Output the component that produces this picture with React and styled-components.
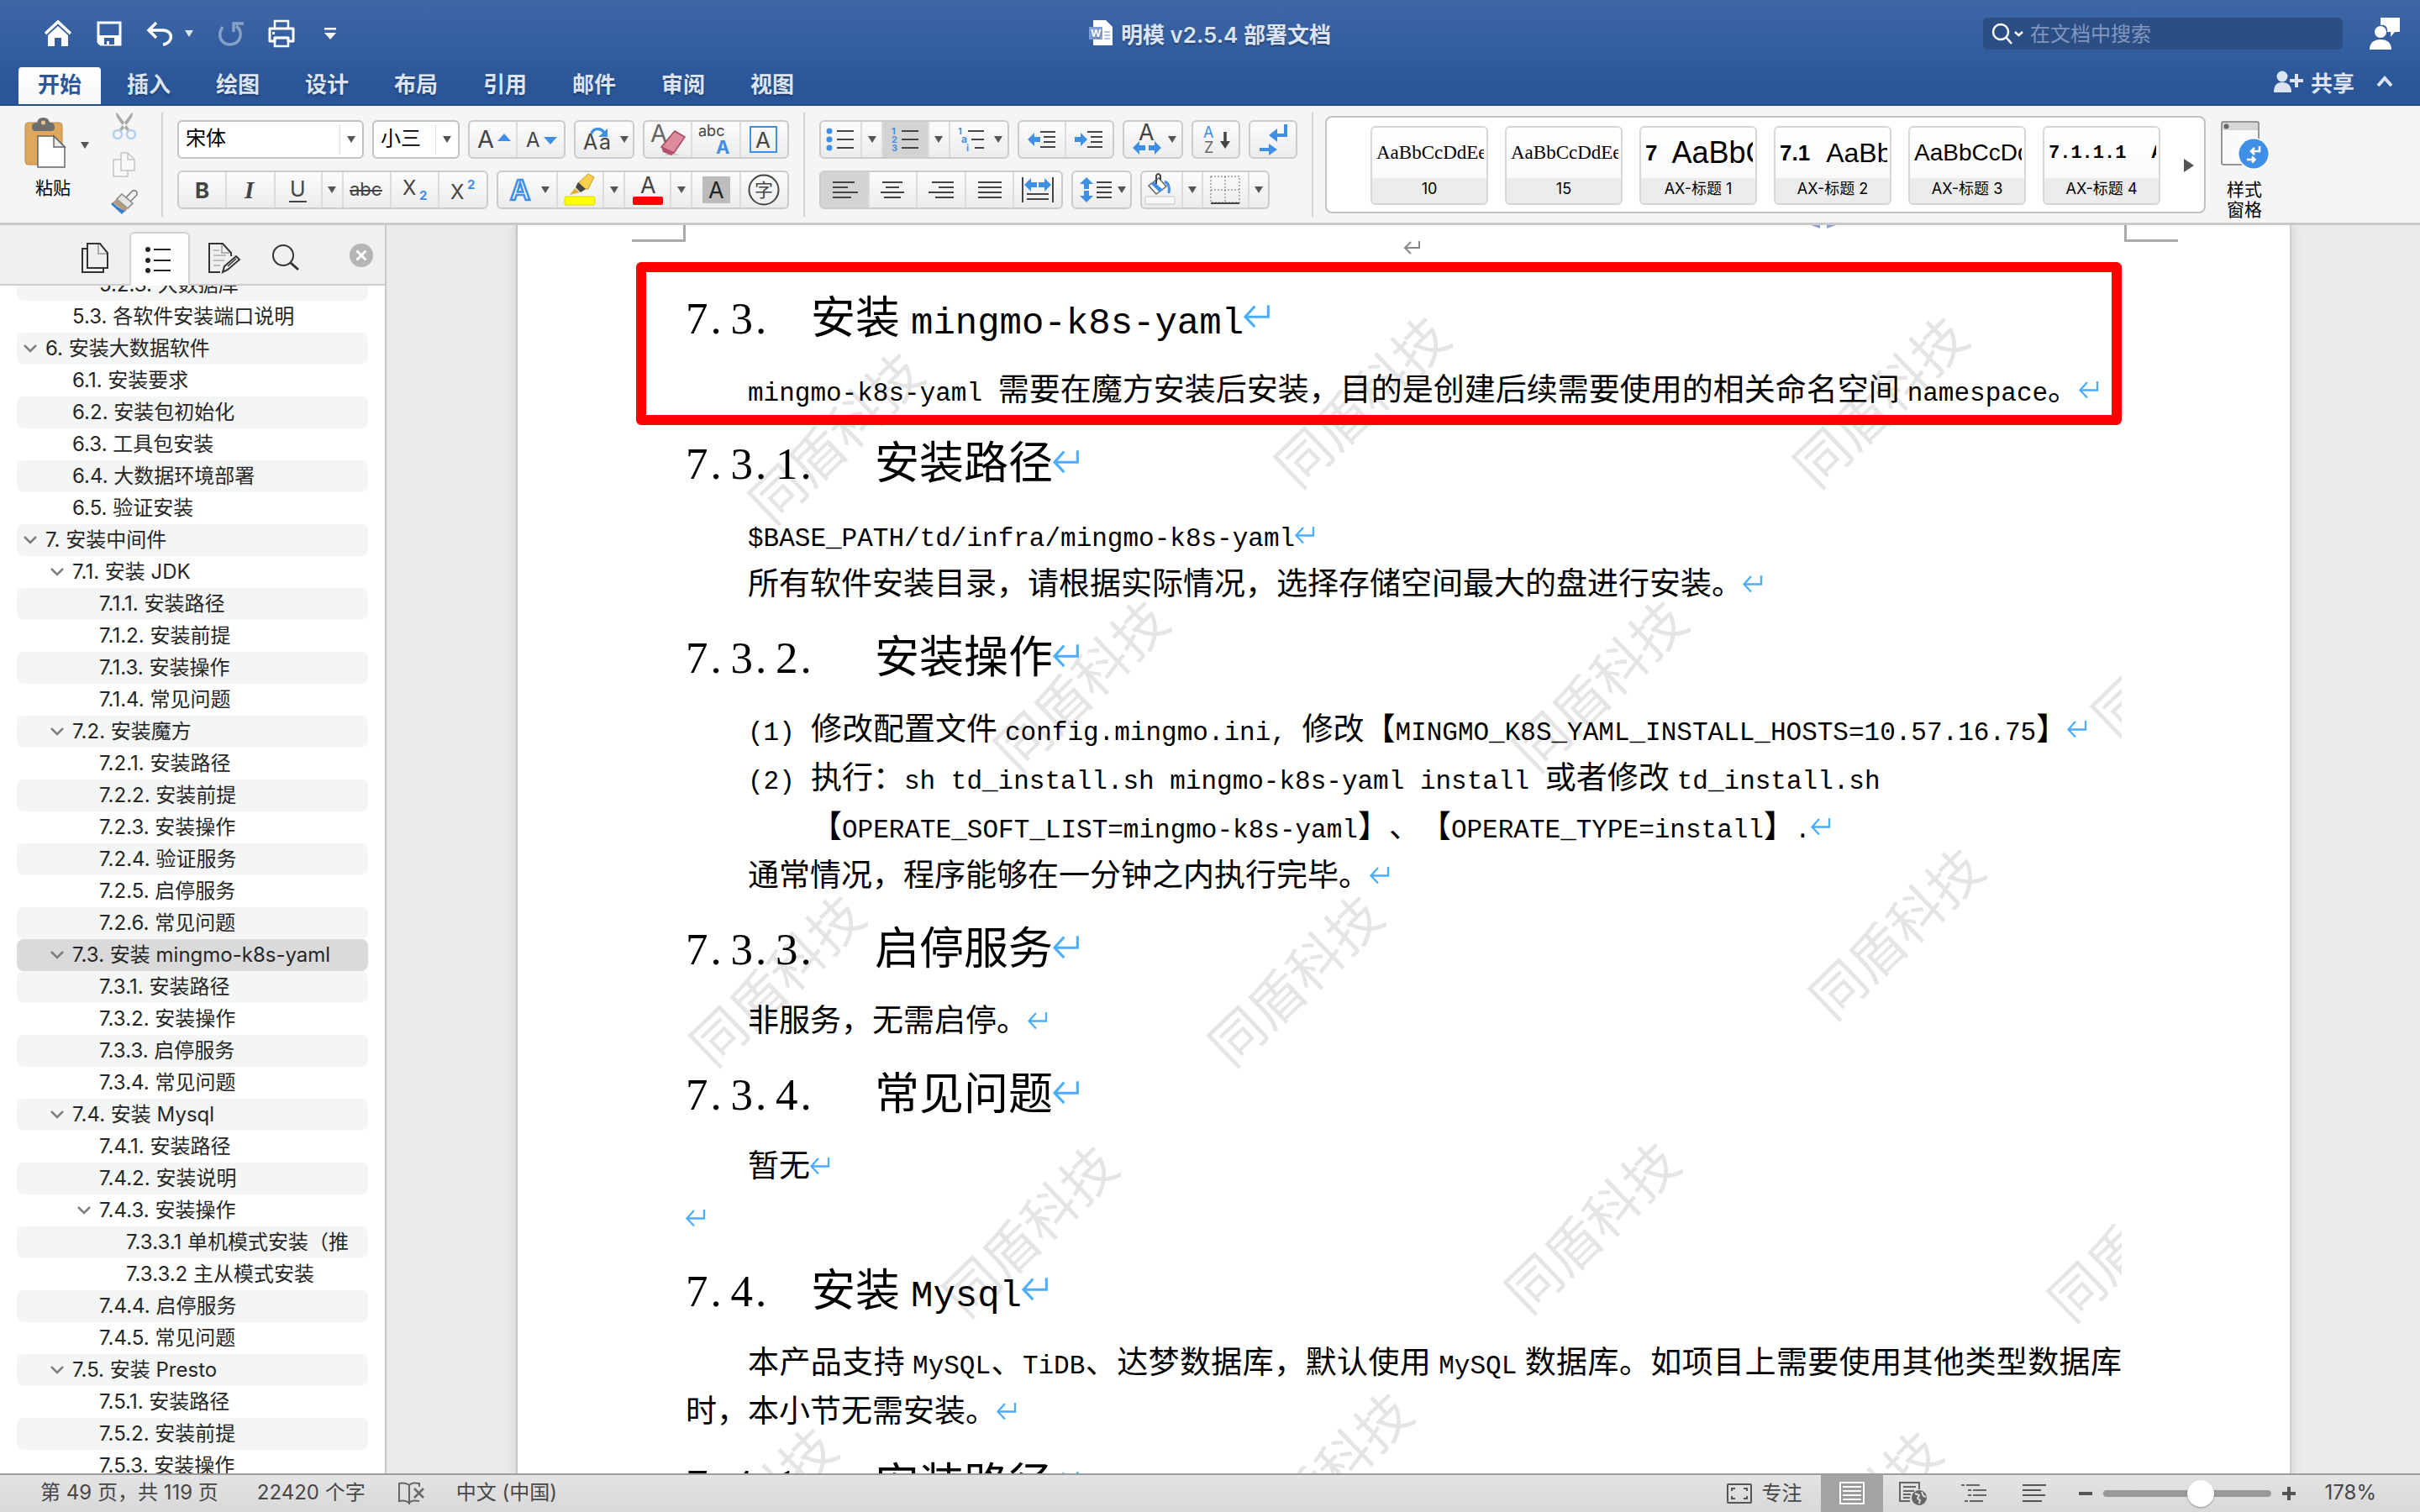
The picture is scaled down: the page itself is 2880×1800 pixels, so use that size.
import React from "react";
import styled, { createGlobalStyle, css } from "styled-components";

const UI = `Inter, "Noto Sans CJK SC", sans-serif`;
const SONG = `"Noto Sans CJK SC", sans-serif`;
const MONO = `"Liberation Mono", "Noto Sans CJK SC", monospace`;
const BLUE = "#3f8fe6";
const INK = "#444";

const GlobalStyle = createGlobalStyle`
  *, *::before, *::after { box-sizing: border-box; }
  body { margin: 0; font-family: ${UI}; color: #000; background: #ebebeb; }
  button, input, select { font: inherit; color: inherit; margin: 0; }
  h1, h2, h3, p, ul { margin: 0; padding: 0; font-weight: 400; }
  ul { list-style: none; }
  svg { display: block; flex: none; overflow: visible; }
`;

const App = styled.div`
  display: flex;
  flex-direction: column;
  height: 100vh;
  overflow: hidden;
`;

/* ---------- title bar ---------- */

const TitleBar = styled.header`
  flex: none;
  display: flex;
  flex-direction: column;
  justify-content: space-between;
  height: 126px;
  background: linear-gradient(#3e67a6, #2a5699 82%);
  border-bottom: 2px solid #254b82;
  color: #dde4f1;
`;

const TitleRow = styled.div`
  display: grid;
  grid-template-columns: 1fr auto 1fr;
  align-items: center;
  height: 80px;
  padding: 0 24px;
`;

const QuickTools = styled.div`
  display: flex;
  align-items: center;
  gap: 29px;
  padding-left: 28px;
`;

const PlainButton = styled.button`
  display: flex;
  align-items: center;
  gap: ${(p) => p.$gap || 0}px;
  padding: 0;
  border: 0;
  background: none;
  opacity: ${(p) => (p.disabled ? 0.4 : 1)};
`;

const DocTitle = styled.h1`
  display: flex;
  align-items: center;
  gap: 10px;
  padding-bottom: 2px;
  font-size: 26px;
  font-weight: 600;
  text-shadow: 0 2px 2px rgba(0, 0, 0, 0.3);
`;

const TitleRight = styled.div`
  display: flex;
  align-items: center;
  justify-content: flex-end;
  gap: 32px;
`;

const SearchBox = styled.label`
  display: flex;
  align-items: center;
  gap: 8px;
  width: 428px;
  height: 38px;
  padding: 0 10px;
  border-radius: 6px;
  background: #2b4e85;
`;

const SearchInput = styled.input`
  flex: 1;
  min-width: 0;
  padding: 0;
  border: 0;
  outline: 0;
  background: none;
  font-size: 24px;
  color: #fff;
  &::placeholder { color: #8197bf; opacity: 1; }
`;

const TabRow = styled.nav`
  display: flex;
  align-items: flex-end;
  justify-content: space-between;
  height: 44px;
  padding: 0 32px 0 22px;
`;

const Tabs = styled.div`
  display: flex;
`;

const Tab = styled.button`
  width: 106px;
  height: 44px;
  padding: 0 0 2px;
  border: 0;
  background: none;
  font-size: 26px;
  font-weight: 600;
  line-height: 42px;
  text-shadow: 0 2px 2px rgba(0, 0, 0, 0.3);
  ${(p) => p.$active && css`
    width: 98px;
    margin-right: 4px;
    border-radius: 4px 4px 0 0;
    background: linear-gradient(#fff, #f7f7f7);
    color: #2b579a;
    text-shadow: none;
  `}
`;

const ShareArea = styled.div`
  display: flex;
  align-items: center;
  gap: 26px;
  height: 44px;
  padding-bottom: 10px;
  font-size: 26px;
  font-weight: 600;
`;

/* ---------- ribbon ---------- */

const Ribbon = styled.section`
  flex: none;
  display: flex;
  height: 142px;
  padding: 8px 24px 0 18px;
  background: #f5f5f5;
  border-bottom: 3px solid #c9c9c9;
`;

const Separator = styled.div`
  flex: none;
  width: 2px;
  height: 124px;
  margin: 0 ${(p) => p.$right}px 0 ${(p) => p.$left}px;
  background: #d4d4d4;
`;

const Clipboard = styled.div`
  display: flex;
  width: 150px;
  justify-content: space-between;
`;

const PasteButton = styled.button`
  display: flex;
  flex-direction: column;
  align-items: center;
  gap: 12px;
  width: 90px;
  padding: 6px 0 0;
  border: 0;
  background: none;
  font-size: 21px;
  line-height: 24px;
`;

const SmallTools = styled.div`
  display: flex;
  flex-direction: column;
  align-items: center;
  gap: 15px;
  width: 40px;
`;

const ToolRows = styled.div`
  display: flex;
  flex-direction: column;
  gap: 14px;
  padding-top: 9px;
`;

const ToolRow = styled.div`
  display: flex;
  gap: 10px;
  height: 46px;
`;

const Group = styled.div`
  display: flex;
  width: ${(p) => p.$w}px;
  border: 2px solid #cbcbcb;
  border-radius: 6px;
  background: linear-gradient(#fcfcfc, #ececec);
`;

const Cell = styled.button`
  display: flex;
  align-items: center;
  justify-content: center;
  flex: ${(p) => p.$w} 1 0;
  min-width: 0;
  padding: 0;
  border: 0;
  border-left: ${(p) => (p.$first ? 0 : 2)}px solid #dcdcdc;
  background: ${(p) => (p.$on ? "#d3d3d3" : "none")};
`;

const Combo = styled.div`
  display: flex;
  align-items: center;
  width: ${(p) => p.$w}px;
  border: 2px solid #c2c2c2;
  border-radius: 6px;
  background: #fff;
`;

const ComboSelect = styled.select`
  flex: 1;
  height: 40px;
  min-width: 0;
  padding: 0 0 4px 8px;
  border: 0;
  outline: 0;
  appearance: none;
  background: none;
  font-size: 24px;
`;

const ComboArrow = styled.span`
  display: flex;
  align-items: center;
  justify-content: center;
  width: 27px;
  height: 36px;
  border-left: 1px solid #dedede;
`;

const Gallery = styled.div`
  flex: 1;
  display: flex;
  align-items: flex-start;
  justify-content: space-between;
  height: 116px;
  margin-top: 4px;
  padding: 10px 12px 0 52px;
  border: 2px solid #c2c2c2;
  border-radius: 8px;
  background: #fff;
`;

const Cards = styled.div`
  display: flex;
  gap: 20px;
`;

const Card = styled.button`
  display: flex;
  flex-direction: column;
  width: 140px;
  height: 94px;
  padding: 0;
  border: 2px solid #d6d6d6;
  border-radius: 6px;
  background: linear-gradient(#fff, #f7f7f7);
  overflow: hidden;
`;

const Sample = styled.span`
  display: flex;
  align-items: center;
  gap: ${(p) => p.$gap || 0}px;
  width: 128px;
  height: 60px;
  margin-left: 5px;
  overflow: hidden;
  white-space: pre;
  font-family: ${(p) => p.$face};
  font-size: ${(p) => p.$size}px;
  font-weight: ${(p) => (p.$bold ? 700 : 400)};
`;

const SampleNumber = styled.b`
  font-size: 26px;
`;

const CardLabel = styled.span`
  flex: 1;
  align-self: stretch;
  background: #ececec;
  font-size: 18px;
  line-height: 26px;
  text-align: center;
`;

const GalleryNext = styled(PlainButton)`
  align-self: stretch;
  padding-bottom: 8px;
`;

const PaneButton = styled.button`
  display: flex;
  flex-direction: column;
  align-items: center;
  gap: 10px;
  width: 60px;
  margin: 0 155px 0 16px;
  padding: 10px 0 0;
  border: 0;
  background: none;
  font-size: 21px;
  line-height: 24px;
`;

/* ---------- navigation pane ---------- */

const Body = styled.div`
  flex: 1;
  display: flex;
  min-height: 0;
`;

const Sidebar = styled.aside`
  flex: none;
  display: flex;
  flex-direction: column;
  width: 460px;
  border-right: 2px solid #c6c6c6;
  background: #fff;
`;

const PaneTabs = styled.div`
  flex: none;
  display: flex;
  align-items: flex-end;
  height: 72px;
  padding: 0 14px 0 72px;
  border-bottom: 2px solid #cdcdcd;
  background: #f0f0f0;
`;

const PaneTab = styled.button`
  display: flex;
  align-items: center;
  justify-content: center;
  width: ${(p) => p.$w}px;
  height: 62px;
  padding: 0;
  border: 0;
  background: none;
  ${(p) => p.$active && css`
    margin: 0 0 -2px;
    height: 64px;
    border: 2px solid #d2d2d2;
    border-bottom: 0;
    border-radius: 6px 6px 0 0;
    background: #fdfdfd;
  `}
`;

const CloseButton = styled(PlainButton)`
  margin: 0 0 20px auto;
`;

const Outline = styled.ul`
  flex: 1;
  min-height: 0;
  padding: 0 20px;
  overflow: hidden;
`;

const OutlineItem = styled.li`
  border-radius: 8px;
  background: ${(p) => (p.$selected ? "#dadada" : p.$tint ? "#f4f5f5" : "transparent")};
  &:first-child { margin-top: -20px; }
`;

const OutlineLink = styled.a`
  display: flex;
  align-items: center;
  gap: 10px;
  height: 38px;
  padding-left: ${(p) => 8 + p.$depth * 32}px;
  overflow: hidden;
  color: #262626;
  font-size: 24px;
  line-height: 38px;
  text-decoration: none;
  white-space: nowrap;
`;

const Twisty = styled.span`
  flex: none;
  width: 16px;
`;

/* ---------- document ---------- */

const Workspace = styled.main`
  flex: 1;
  min-width: 0;
  padding: 0 153px 0 154px;
  background: #ebebeb;
  overflow: hidden;
`;

const Page = styled.article`
  position: relative;
  min-height: 100%;
  border-left: 2px solid #c4c4c4;
  border-right: 2px solid #cfcfcf;
  background: #fff;
  box-shadow: 0 0 14px rgba(0, 0, 0, 0.12);
`;

const WatermarkLayer = styled.div`
  position: absolute;
  inset: 0 200px 0 0;
  overflow: hidden;
`;

const Watermark = styled.span`
  position: absolute;
  left: ${(p) => p.$x}px;
  top: ${(p) => p.$y}px;
  transform: translate(-50%, -50%) rotate(-44deg);
  color: #e5e5e5;
  font-family: ${SONG};
  font-size: 64px;
  line-height: 64px;
  white-space: nowrap;
`;

const PageHeader = styled.div`
  position: relative;
  display: flex;
  justify-content: center;
  height: 49px;
  padding: 19px 0 0 20px;
`;

const CropMark = styled.span`
  position: absolute;
  top: 0;
  width: 64px;
  height: 20px;
  border-bottom: 3px solid #aaa;
  ${(p) => (p.$side === "left"
    ? "left: 136px; border-right: 3px solid #aaa;"
    : "right: 133px; border-left: 3px solid #aaa;")}
`;

const HeaderRemnant = styled.span`
  position: absolute;
  top: 0;
  right: 540px;
`;

const Text = styled.div`
  position: relative;
  padding: 0 200px;
  font-family: ${SONG};
  font-size: 37px;
  line-height: 58px;
  text-spacing-trim: space-all;
  white-space: nowrap;
`;

const Boxed = styled.section`
  position: relative;
  &::after {
    content: "";
    position: absolute;
    inset: -5px 0 -16px -59px;
    border: 12px solid #ff0000;
    border-radius: 6px;
  }
`;

const Heading = styled.h2`
  font-size: 53px;
  line-height: 115px;
`;

const HeadingNumber = styled.span`
  display: inline-block;
  width: ${(p) => (p.$level === 2 ? 149 : 225)}px;
  font-family: "Liberation Serif", serif;
  line-height: 1;
`;

const Dot = styled.span`
  display: inline-block;
  width: 27px;
  padding-left: 3px;
`;

const Para = styled.p`
  padding-left: 74px;
`;

const HangingPara = styled.p`
  padding-left: 149px;
  text-indent: -75px;
`;

const ItemNumber = styled.span`
  display: inline-block;
  width: 75px;
  text-indent: 0;
  font-family: ${MONO};
  font-size: 31px;
  line-height: 1;
`;

const FullLine = styled.span`
  display: block;
  text-align-last: justify;
`;

const NextLine = styled.span`
  display: block;
  margin-left: -74px;
`;

const EmptyPara = styled.p`
  height: 61px;
  padding-top: 4px;
`;

const Latin = styled.span`
  margin-left: ${(p) => (p.$before ? (p.$large ? 13 : 9) : 0)}px;
  margin-right: ${(p) => (p.$after ? 9 : 0)}px;
  font-family: ${MONO};
  font-size: ${(p) => (p.$large ? 44 : 31)}px;
  line-height: 1;
  white-space: pre;
`;

const MarkIcon = styled.svg`
  display: inline-block;
  width: ${(p) => (p.$large ? 32 : 24)}px;
  height: ${(p) => (p.$large ? 27 : 20)}px;
  vertical-align: ${(p) => (p.$large ? 7 : 3)}px;
`;

/* ---------- status bar ---------- */

const StatusBar = styled.footer`
  flex: none;
  display: flex;
  align-items: center;
  justify-content: space-between;
  height: 46px;
  padding: 0 52px 0 48px;
  border-top: 2px solid #9d9d9d;
  background: linear-gradient(#e4e4e4, #d8d8d8);
  color: #474747;
  font-size: 24px;
  line-height: 42px;
`;

const StatusSide = styled.div`
  display: flex;
  align-items: center;
  gap: ${(p) => p.$gap}px;
  height: 100%;
`;

const StatusText = styled.span`
  height: 44px;
  margin-right: ${(p) => (p.$wide ? 8 : 0)}px;
`;

const ViewButton = styled.button`
  display: flex;
  align-items: center;
  justify-content: center;
  width: ${(p) => (p.$on ? 74 : 72)}px;
  height: 44px;
  padding: 0;
  border: 0;
  background: ${(p) => (p.$on ? "#a3a3a3" : "none")};
`;

const ZoomControls = styled.div`
  display: flex;
  align-items: center;
  gap: 13px;
  margin-left: 17px;
`;

const ZoomSlider = styled.input`
  width: 200px;
  height: 34px;
  appearance: none;
  background: none;
  &::-webkit-slider-runnable-track {
    height: 8px;
    border-radius: 4px;
    background: #999;
  }
  &::-webkit-slider-thumb {
    appearance: none;
    width: 32px;
    height: 32px;
    margin-top: -12px;
    border-radius: 50%;
    background: #fff;
    box-shadow: 0 1px 2px rgba(0, 0, 0, 0.35);
  }
`;

const ZoomValue = styled.output`
  height: 44px;
  margin-left: 22px;
`;

const FocusButton = styled(PlainButton)`
  margin-right: 22px;
`;

/* ---------- drawings ---------- */

const Svg = ({ w, h = 42, children, ...rest }) => (
  <svg width={w} height={h} viewBox={`0 0 ${w} ${h}`} fill="none" aria-hidden="true" {...rest}>
    {children}
  </svg>
);

const Glyph = ({ x, y, s, c = INK, b, children, ...rest }) => (
  <text x={x} y={y} fontSize={s} fill={c} fontWeight={b ? 700 : 400} fontFamily={UI} {...rest}>
    {children}
  </text>
);

const Caret = ({ color = "#555" }) => (
  <Svg w={10} h={8}><path d="M0 0H10L5 8Z" fill={color} /></Svg>
);

const caretAt = (x, y = 17) => <path d={`M${x - 5} ${y}h10l-5 8z`} fill="#555" />;

const bars = (list, c = INK) => list.map(([x, y, w], i) => (
  <rect key={i} x={x} y={y} width={w} height="2" fill={c} />
));

const Mark = ({ large, color = "#4badff" }) => (
  <MarkIcon $large={large} viewBox="0 0 24 20" fill="none" aria-hidden="true">
    <path d="M22 0V10.500H2M10 1L1.500 10.500L10 19.500" stroke={color} strokeWidth="2.300" />
  </MarkIcon>
);

const HomeIcon = () => (
  <Svg w={34} h={32}>
    <path d="M2 16L17 2L32 16" stroke="#fff" strokeWidth="3.500" />
    <path d="M5 18L17 7L29 18V31H21V21H13V31H5Z" fill="#fff" />
  </Svg>
);
const SaveIcon = () => (
  <Svg w={30} h={30}>
    <path d="M2 2H28V28H5L2 25Z" stroke="#fff" strokeWidth="3" />
    <path d="M2 17H28V28H2Z" fill="#fff" />
    <path d="M9 20H21V28H15V24H12V28H9Z" fill="#345f9f" />
  </Svg>
);
const UndoIcon = () => (
  <Svg w={34} h={30}>
    <path d="M12 2L3 11L12 20M3 11H20C34 12 31 27 20 28" stroke="#fff" strokeWidth="3.500" />
  </Svg>
);
const RedoIcon = () => (
  <Svg w={30} h={32}>
    <path d="M6 8C-1 18 4 29 15 29C28 28 31 14 22 7M19 14V4H31" stroke="#fff" strokeWidth="3.500" />
  </Svg>
);
const PrintIcon = () => (
  <Svg w={34} h={34}>
    <path d="M9 11V2H25V11" stroke="#fff" strokeWidth="2.500" />
    <path d="M3 11H31V26H25V22H9V26H3Z" stroke="#fff" strokeWidth="3" strokeLinejoin="round" />
    <path d="M9 22H25V32H9Z" stroke="#fff" strokeWidth="2.500" />
    <rect x="6" y="15" width="3" height="3" fill="#fff" />
  </Svg>
);
const MoreIcon = () => (
  <Svg w={20} h={14}><path d="M5 0H19V2.500H5ZM5 6H19L12 14Z" fill="#fff" /></Svg>
);
const WordIcon = () => (
  <Svg w={28} h={30}>
    <path d="M5 0H20L28 8V30H5Z" fill="#fff" />
    <path d="M18 14H25M18 18H25M18 22H25" stroke="#8fb0e0" strokeWidth="1.500" />
    <rect x="0" y="8" width="16" height="15" fill="#7f9fd8" />
    <Glyph x={2} y={20} s={12} c="#fff" b>W</Glyph>
  </Svg>
);
const SearchIcon = () => (
  <Svg w={38} h={28}>
    <circle cx="11" cy="12" r="9" stroke="#fff" strokeWidth="2.500" />
    <path d="M17 18L24 26" stroke="#fff" strokeWidth="2.500" />
    <path d="M28 12L32.500 16L37 12" stroke="#fff" strokeWidth="2.500" />
  </Svg>
);
const PersonTalkIcon = () => (
  <Svg w={36} h={38}>
    <path d="M13 0H36V17H30L25 23V17H21C22 10 17 8 13 9Z" fill="#fff" />
    <circle cx="13" cy="17" r="7" fill="#fff" />
    <path d="M0 38C0 30 5 26 13 26S26 30 26 38Z" fill="#fff" />
  </Svg>
);
const SharePersonIcon = () => (
  <Svg w={36} h={26}>
    <circle cx="10" cy="7" r="6.500" fill="#dde4f1" />
    <path d="M0 26C0 18 3 14 10 14S21 18 21 26Z" fill="#dde4f1" />
    <path d="M27 4V20M19 12H35" stroke="#dde4f1" strokeWidth="4" />
  </Svg>
);
const CollapseIcon = () => (
  <Svg w={20} h={14}><path d="M2 12L10 3L18 12" stroke="#dde4f1" strokeWidth="4" /></Svg>
);
const PasteIcon = () => (
  <Svg w={90} h={60}>
    <g transform="translate(8 0)">
      <rect x="4" y="6" width="44" height="50" rx="4" fill="#dda85c" stroke="#b98542" />
      <path d="M12 11Q12 6 18 6Q19 0 25.500 0T33 6Q39 6 39 11V12Q39 16 35 16H16Q12 16 12 12Z" fill="#6e6e6e" />
      <circle cx="25.500" cy="6" r="2.500" fill="#e8c690" />
      <path d="M19 22H38L51 35V59H19Z" fill="#fff" stroke="#666" strokeWidth="1.500" />
      <path d="M38 22V35H51Z" fill="#eee" stroke="#666" strokeWidth="1.500" />
      <path d="M70 29H80L75 37Z" fill="#555" />
    </g>
  </Svg>
);
const CutIcon = () => (
  <Svg w={30} h={32}>
    <path d="M5 0Q5 5 9 10L18 22L21 20L7 1ZM25 0Q25 5 21 10L12 22L9 20L23 1Z" fill="#a9a9a9" />
    <circle cx="7" cy="26" r="5" stroke="#b3cfee" strokeWidth="2.500" />
    <circle cx="23" cy="26" r="5" stroke="#b3cfee" strokeWidth="2.500" />
  </Svg>
);
const CopyIcon = () => (
  <Svg w={28} h={30}>
    <path d="M1 9H18V29H1Z" fill="#fafafa" stroke="#c4c4c4" strokeWidth="1.500" />
    <path d="M10 1H18L26 9V22H10Z" fill="#fafafa" stroke="#c4c4c4" strokeWidth="1.500" />
    <path d="M18 1V9H26" stroke="#c4c4c4" strokeWidth="1.500" />
  </Svg>
);
const BrushIcon = () => (
  <Svg w={34} h={30}>
    <path d="M19 9L27 1Q33 0 32 6L24 14Z" fill="#f4f4f4" stroke="#777" strokeWidth="1.500" />
    <path d="M14 5L27 16L21 22L8 11Z" fill="#e6e6e6" stroke="#888" strokeWidth="1.500" />
    <path d="M8 11L21 22L18 26L3 15Z" fill="#b29a80" />
    <path d="M3 15Q10 22 18 25L14 29L1 17Z" fill="#3c7dc9" />
  </Svg>
);
const PaneIcon = () => (
  <Svg w={60} h={60}>
    <rect x="3" y="1" width="44" height="51" rx="2" fill="#fafafa" stroke="#777" strokeWidth="1.500" />
    <rect x="4" y="2" width="42" height="9" fill="#d6d6d6" />
    <circle cx="8.500" cy="6.500" r="3" fill="#666" />
    <circle cx="41" cy="39" r="19" fill="#fff" />
    <circle cx="41" cy="39" r="17.500" fill={BLUE} />
    <path d="M48 30V36H39M42 32L38 36L42 40M33 46H42M39 42.500L42.500 46L39 49.500" stroke="#fff" strokeWidth="2.500" />
  </Svg>
);

const arrowLeft = (x, y) => <path d={`M${x} ${y}l8 -8v5h7v6h-7v5z`} fill={BLUE} />;
const arrowRight = (x, y) => <path d={`M${x} ${y}l-8 -8v5h-7v6h7v5z`} fill={BLUE} />;

/* ---------- data ---------- */

const TABS = ["开始", "插入", "绘图", "设计", "布局", "引用", "邮件", "审阅", "视图"];

const OUTLINE = [
  [2, "5.2.3. 大数据库"], [1, "5.3. 各软件安装端口说明"],
  [0, "6. 安装大数据软件", true], [1, "6.1. 安装要求"], [1, "6.2. 安装包初始化"],
  [1, "6.3. 工具包安装"], [1, "6.4. 大数据环境部署"], [1, "6.5. 验证安装"],
  [0, "7. 安装中间件", true], [1, "7.1. 安装 JDK", true],
  [2, "7.1.1. 安装路径"], [2, "7.1.2. 安装前提"], [2, "7.1.3. 安装操作"], [2, "7.1.4. 常见问题"],
  [1, "7.2. 安装魔方", true],
  [2, "7.2.1. 安装路径"], [2, "7.2.2. 安装前提"], [2, "7.2.3. 安装操作"],
  [2, "7.2.4. 验证服务"], [2, "7.2.5. 启停服务"], [2, "7.2.6. 常见问题"],
  [1, "7.3. 安装 mingmo-k8s-yaml", true],
  [2, "7.3.1. 安装路径"], [2, "7.3.2. 安装操作"], [2, "7.3.3. 启停服务"], [2, "7.3.4. 常见问题"],
  [1, "7.4. 安装 Mysql", true],
  [2, "7.4.1. 安装路径"], [2, "7.4.2. 安装说明"], [2, "7.4.3. 安装操作", true],
  [3, "7.3.3.1 单机模式安装（推"], [3, "7.3.3.2 主从模式安装"],
  [2, "7.4.4. 启停服务"], [2, "7.4.5. 常见问题"],
  [1, "7.5. 安装 Presto", true],
  [2, "7.5.1. 安装路径"], [2, "7.5.2. 安装前提"], [2, "7.5.3. 安装操作"],
];

const WATERMARKS = [
  [376, 250], [1002, 207], [1619, 207], [668, 545], [1285, 545], [1974, 504],
  [306, 896], [923, 896], [1638, 840], [607, 1194], [1276, 1190], [1922, 1200],
  [273, 1530], [958, 1488], [1588, 1534],
];

/* ---------- sections ---------- */

const FontTools = () => (
  <ToolRows>
    <ToolRow>
      <Combo $w={222}>
        <ComboSelect aria-label="字体"><option>宋体</option></ComboSelect>
        <ComboArrow><Caret /></ComboArrow>
      </Combo>
      <Combo $w={104}>
        <ComboSelect aria-label="字号"><option>小三</option></ComboSelect>
        <ComboArrow><Caret /></ComboArrow>
      </Combo>
      <Group $w={116}>
        <Cell $w={58} $first aria-label="增大字号">
          <Svg w={54}><Glyph x={8} y={31} s={29}>A</Glyph><path d="M32 23L40 14L48 23Z" fill={BLUE} /></Svg>
        </Cell>
        <Cell $w={58} aria-label="减小字号">
          <Svg w={54}><Glyph x={9} y={30} s={24}>A</Glyph><path d="M30 18H46L38 27Z" fill={BLUE} /></Svg>
        </Cell>
      </Group>
      <Group $w={72}>
        <Cell $w={72} $first aria-label="更改大小写">
          <Svg w={68}>
            <Glyph x={9} y={33} s={25}>A</Glyph><Glyph x={28} y={33} s={25}>a</Glyph>
            <path d="M19 14C21 7 30 7 34 13" stroke={BLUE} strokeWidth="3.500" /><path d="M38 8V18H27Z" fill={BLUE} />
            {caretAt(58)}
          </Svg>
        </Cell>
      </Group>
      <Group $w={174}>
        <Cell $w={58} $first aria-label="清除格式">
          <Svg w={54}>
            <Glyph x={6} y={24} s={29} c="#666">A</Glyph>
            <path d="M22 40H42L30 36Z" fill="#ccc" />
            <path d="M35 11L47 18L34 37L19 30Z" fill="#dd8a9e" stroke="#a34a62" strokeWidth="1.500" />
            <path d="M19 30L34 37L31 40L21 36Z" fill="#b9506e" />
          </Svg>
        </Cell>
        <Cell $w={58} aria-label="拼音指南">
          <Svg w={54}><Glyph x={6} y={17} s={18}>abc</Glyph><Glyph x={27} y={38} s={22} c={BLUE} b>A</Glyph></Svg>
        </Cell>
        <Cell $w={58} aria-label="字符边框">
          <Svg w={54}><rect x="11" y="6" width="31" height="30" stroke={BLUE} strokeWidth="2" /><Glyph x={17} y={31} s={26}>A</Glyph></Svg>
        </Cell>
      </Group>
    </ToolRow>
    <ToolRow>
      <Group $w={370}>
        <Cell $w={58} $first aria-label="加粗"><Svg w={54}><Glyph x={18} y={31} s={26} b>B</Glyph></Svg></Cell>
        <Cell $w={58} aria-label="倾斜"><Svg w={54}><Glyph x={20} y={31} s={29} b fontFamily="Liberation Serif" fontStyle="italic">I</Glyph></Svg></Cell>
        <Cell $w={56} aria-label="下划线"><Svg w={52}><Glyph x={16} y={29} s={25}>U</Glyph>{bars([[15, 34, 21]])}</Svg></Cell>
        <Cell $w={24} aria-label="下划线选项"><Caret /></Cell>
        <Cell $w={58} aria-label="删除线"><Svg w={54}><Glyph x={7} y={28} s={22}>abc</Glyph>{bars([[7, 21, 39]])}</Svg></Cell>
        <Cell $w={58} aria-label="下标"><Svg w={54}><Glyph x={12} y={27} s={24}>X</Glyph><Glyph x={32} y={33} s={15} c={BLUE} b>2</Glyph></Svg></Cell>
        <Cell $w={58} aria-label="上标"><Svg w={54}><Glyph x={12} y={32} s={24}>X</Glyph><Glyph x={32} y={20} s={15} c={BLUE} b>2</Glyph></Svg></Cell>
      </Group>
      <Group $w={348}>
        <Cell $w={72} $first aria-label="文本效果">
          <Svg w={68}>
            <text x="14" y="33" fontSize="33" fontWeight="600" fontFamily={UI} fill="#fff" stroke={BLUE} strokeWidth="2.500">A</text>
            {caretAt(56)}
          </Svg>
        </Cell>
        <Cell $w={56} aria-label="突出显示">
          <Svg w={52}>
            <path d="M25 12L36 2L43 6L36 20L30 20Z" fill="#fbcf4c" stroke="#c99a2a" />
            <path d="M24 12L33 20L27 24L21 18Z" fill="#444" /><path d="M20 19L26 24L14 27Z" fill="#e0b040" />
            <rect x="8" y="29" width="36" height="10" rx="2" fill="#ffff00" stroke="#d9d900" />
          </Svg>
        </Cell>
        <Cell $w={24} aria-label="突出显示选项"><Caret /></Cell>
        <Cell $w={56} aria-label="字体颜色">
          <Svg w={52}><Glyph x={17} y={25} s={27}>A</Glyph><rect x="8" y="29" width="36" height="10" rx="2" fill="#ff0000" /></Svg>
        </Cell>
        <Cell $w={24} aria-label="字体颜色选项"><Caret /></Cell>
        <Cell $w={58} aria-label="字符底纹">
          <Svg w={54}><rect x="11" y="5" width="33" height="32" fill="#bcbcbc" /><Glyph x={18} y={31} s={27} c="#222">A</Glyph></Svg>
        </Cell>
        <Cell $w={58} aria-label="带圈字符">
          <Svg w={54}><circle cx="27" cy="21" r="17.500" stroke={INK} strokeWidth="2" /><Glyph x={16} y={29} s={22}>字</Glyph></Svg>
        </Cell>
      </Group>
    </ToolRow>
  </ToolRows>
);

const ParagraphTools = () => (
  <ToolRows>
    <ToolRow>
      <Group $w={226}>
        <Cell $w={50} $first aria-label="项目符号">
          <Svg w={46}>{[11, 21, 31].map((y) => <circle key={y} cx="9" cy={y} r="3.500" fill={BLUE} />)}{bars([[18, 10, 20], [18, 20, 20], [18, 30, 20]])}</Svg>
        </Cell>
        <Cell $w={24} aria-label="项目符号选项"><Caret /></Cell>
        <Cell $w={56} $on aria-label="编号">
          <Svg w={52}>{["1", "2", "3"].map((n, i) => <Glyph key={n} x={9} y={15 + i * 10} s={11} c={BLUE} b>{n}</Glyph>)}{bars([[21, 10, 20], [21, 20, 20], [21, 30, 20]])}</Svg>
        </Cell>
        <Cell $w={24} aria-label="编号选项"><Caret /></Cell>
        <Cell $w={72} aria-label="多级列表">
          <Svg w={68}>
            <Glyph x={9} y={15} s={11} c={BLUE} b>1</Glyph><Glyph x={13} y={25} s={12} c={BLUE} b>a</Glyph><Glyph x={19} y={35} s={11} c={BLUE} b>i</Glyph>
            {bars([[21, 10, 19], [25, 20, 15], [29, 30, 11]])}{caretAt(57)}
          </Svg>
        </Cell>
      </Group>
      <Group $w={115}>
        <Cell $w={57} $first aria-label="减少缩进">
          <Svg w={53}>{arrowLeft(9, 21)}{bars([[24, 11, 18], [28, 17, 14], [28, 23, 14], [24, 29, 18]])}</Svg>
        </Cell>
        <Cell $w={58} aria-label="增加缩进">
          <Svg w={54}>{arrowRight(24, 21)}{bars([[24, 11, 18], [28, 17, 14], [28, 23, 14], [24, 29, 18]])}</Svg>
        </Cell>
      </Group>
      <Group $w={72}>
        <Cell $w={72} $first aria-label="中文版式">
          <Svg w={68}><Glyph x={17} y={22} s={27}>A</Glyph>{arrowLeft(10, 31)}{arrowRight(44, 31)}{caretAt(57)}</Svg>
        </Cell>
      </Group>
      <Group $w={58}>
        <Cell $w={58} $first aria-label="排序">
          <Svg w={54}>
            <Glyph x={12} y={19} s={18} c={BLUE}>A</Glyph><Glyph x={13} y={37} s={18} c="#666">Z</Glyph>
            <path d="M38 12V26" stroke={INK} strokeWidth="3.500" /><path d="M32 23H44L38 32Z" fill={INK} />
          </Svg>
        </Cell>
      </Group>
      <Group $w={58}>
        <Cell $w={58} $first aria-label="显示编辑标记">
          <Svg w={54}>
            <path d="M42 3V16H28" stroke={BLUE} strokeWidth="4" /><path d="M22 16L32 8V24Z" fill={BLUE} />
            <path d="M11 33H24" stroke={BLUE} strokeWidth="4" /><path d="M32 33L22 26V40Z" fill={BLUE} />
          </Svg>
        </Cell>
      </Group>
    </ToolRow>
    <ToolRow>
      <Group $w={290}>
        <Cell $w={58} $first $on aria-label="左对齐"><Svg w={54}>{bars([[13, 11, 26], [13, 17, 18], [13, 23, 30], [13, 29, 22]])}</Svg></Cell>
        <Cell $w={58} aria-label="居中"><Svg w={54}>{bars([[15, 11, 24], [19, 17, 16], [13, 23, 28], [17, 29, 20]])}</Svg></Cell>
        <Cell $w={58} aria-label="右对齐"><Svg w={54}>{bars([[16, 11, 26], [24, 17, 18], [12, 23, 30], [20, 29, 22]])}</Svg></Cell>
        <Cell $w={58} aria-label="两端对齐"><Svg w={54}>{bars([[13, 11, 28], [13, 17, 28], [13, 23, 28], [13, 29, 28]])}</Svg></Cell>
        <Cell $w={58} aria-label="分散对齐">
          <Svg w={54}><path d="M9 6V36M45 6V36" stroke={INK} strokeWidth="2" />{arrowLeft(11, 15)}{arrowRight(43, 15)}{bars([[14, 25, 26], [14, 31, 26]])}</Svg>
        </Cell>
      </Group>
      <Group $w={72}>
        <Cell $w={72} $first aria-label="行距">
          <Svg w={68}>
            <path d="M16 6L24 14H19V20H13V14H8ZM16 36L24 28H19V22H13V28H8Z" fill={BLUE} />
            {bars([[28, 11, 18], [28, 17, 18], [28, 23, 18], [28, 29, 18]])}{caretAt(58)}
          </Svg>
        </Cell>
      </Group>
      <Group $w={154}>
        <Cell $w={50} $first aria-label="底纹">
          <Svg w={46}>
            <path d="M8 16L20 7L29 17L17 26Z" fill="#fff" stroke="#666" strokeWidth="1.500" />
            <path d="M14 11L25 21L21 24L11 14Z" fill={BLUE} /><path d="M17 14V4Q19 0 22 4V9" stroke={INK} strokeWidth="2" />
            <path d="M27 11Q34 14 32 25" stroke={BLUE} strokeWidth="3" />
            <rect x="4" y="29" width="35" height="9" rx="1" fill="#f8f8f8" stroke="#c4c4c4" />
          </Svg>
        </Cell>
        <Cell $w={24} aria-label="底纹选项"><Caret /></Cell>
        <Cell $w={56} aria-label="边框">
          <Svg w={52}>
            <path d="M9 5H43V36H9ZM26 5V36M9 21H43" stroke="#999" strokeWidth="1.500" strokeDasharray="2 2" />{bars([[9, 36, 34]])}
          </Svg>
        </Cell>
        <Cell $w={24} aria-label="边框选项"><Caret /></Cell>
      </Group>
    </ToolRow>
  </ToolRows>
);

const StyleGallery = () => (
  <Gallery>
    <Cards>
      <Card><Sample $face={`"Liberation Serif", serif`} $size={23}>AaBbCcDdEe</Sample><CardLabel>10</CardLabel></Card>
      <Card><Sample $face={`"Liberation Serif", serif`} $size={23}>AaBbCcDdEe</Sample><CardLabel>15</CardLabel></Card>
      <Card><Sample $face={`"Liberation Sans", sans-serif`} $size={36} $gap={17}><SampleNumber>7</SampleNumber>AaBbC</Sample><CardLabel>AX-标题 1</CardLabel></Card>
      <Card><Sample $face={`"Liberation Sans", sans-serif`} $size={32} $gap={19}><SampleNumber>7.1</SampleNumber>AaBb</Sample><CardLabel>AX-标题 2</CardLabel></Card>
      <Card><Sample $face={`"Liberation Sans", sans-serif`} $size={28}>AaBbCcDd</Sample><CardLabel>AX-标题 3</CardLabel></Card>
      <Card><Sample $face={`"Liberation Mono", monospace`} $size={22} $gap={30} $bold><span>7.1.1.1</span><span>A</span></Sample><CardLabel>AX-标题 4</CardLabel></Card>
    </Cards>
    <GalleryNext aria-label="更多样式"><Svg w={12} h={16}><path d="M0 0L12 8L0 16Z" fill="#555" /></Svg></GalleryNext>
  </Gallery>
);

const NavigationPane = () => (
  <Sidebar>
    <PaneTabs>
      <PaneTab $w={82} aria-label="缩略图">
        <Svg w={34} h={38}>
          <path d="M8 8H2V36H27V31" stroke="#333" strokeWidth="2" />
          <path d="M8 2H23L32 13V31H8Z" stroke="#333" strokeWidth="2" /><path d="M21 3V14H31" stroke="#aaa" strokeWidth="2" />
        </Svg>
      </PaneTab>
      <PaneTab $w={72} $active aria-label="文档结构图">
        <Svg w={36} h={32}>
          {[4, 17, 29].map((y) => <g key={y}><circle cx="4" cy={y} r="3" fill="#222" /><path d={`M11 ${y}H31`} stroke="#222" strokeWidth="2" /></g>)}
        </Svg>
      </PaneTab>
      <PaneTab $w={82} aria-label="审阅">
        <Svg w={40} h={38}>
          <path d="M15 36H2V2H18L28 13V17" stroke="#333" strokeWidth="2" /><path d="M17 3V13H26" stroke="#999" strokeWidth="1.500" />
          <path d="M7 10H14M7 16H22M7 22H20M7 28H15" stroke="#aaa" strokeWidth="1.500" />
          <path d="M18 36L20 29L34 17L38 21L24 33Z" stroke="#333" strokeWidth="2" /><path d="M24 29L34 20" stroke="#333" strokeWidth="1.500" />
        </Svg>
      </PaneTab>
      <PaneTab $w={64} aria-label="搜索">
        <Svg w={34} h={34}><circle cx="14" cy="14" r="12" stroke="#333" strokeWidth="2" /><path d="M23 23L32 31" stroke="#333" strokeWidth="3" /></Svg>
      </PaneTab>
      <CloseButton aria-label="关闭">
        <Svg w={28} h={28}><circle cx="14" cy="14" r="14" fill="#b5b5b5" /><path d="M8.500 8.500L19.500 19.500M19.500 8.500L8.500 19.500" stroke="#fff" strokeWidth="3" /></Svg>
      </CloseButton>
    </PaneTabs>
    <Outline>
      {OUTLINE.map(([depth, label, open], i) => (
        <OutlineItem key={label} $tint={i % 2 === 0} $selected={label.startsWith("7.3. ")}>
          <OutlineLink href={`#s${i}`} $depth={depth}>
            <Twisty>{open && <Svg w={16} h={12}><path d="M1 2L8 9L15 2" stroke="#7d7d7d" strokeWidth="2.500" /></Svg>}</Twisty>
            {label}
          </OutlineLink>
        </OutlineItem>
      ))}
    </Outline>
  </Sidebar>
);

const SectionHeading = ({ level = 3, number, children }) => (
  <Heading as={level === 2 ? "h2" : "h3"}>
    <HeadingNumber $level={level}>
      {number.split("").map((c, i) => (c === "." ? <Dot key={i}>.</Dot> : c))}
    </HeadingNumber>
    {children}<Mark large />
  </Heading>
);

const Document = () => (
  <Workspace>
    <Page>
      <WatermarkLayer aria-hidden="true">
        {WATERMARKS.map(([x, y]) => <Watermark key={`${x}-${y}`} $x={x} $y={y}>同盾科技</Watermark>)}
      </WatermarkLayer>
      <PageHeader>
        <CropMark $side="left" />
        <HeaderRemnant><Svg w={30} h={4}><path d="M0 0H11V4ZM19 0H30L19 4Z" fill="#8da2d2" /></Svg></HeaderRemnant>
        <CropMark $side="right" />
        <Svg w={20} h={16}><path d="M18 0V8H2M8 1L1 8L8 15" stroke="#888" strokeWidth="2" /></Svg>
      </PageHeader>
      <Text>
        <Boxed>
          <SectionHeading level={2} number="7.3.">安装<Latin $large $before>mingmo-k8s-yaml</Latin></SectionHeading>
          <Para><Latin>mingmo-k8s-yaml </Latin>需要在魔方安装后安装，目的是创建后续需要使用的相关命名空间<Latin $before>namespace</Latin>。<Mark /></Para>
        </Boxed>
        <SectionHeading number="7.3.1.">安装路径</SectionHeading>
        <Para><Latin>$BASE_PATH/td/infra/mingmo-k8s-yaml</Latin><Mark /></Para>
        <Para>所有软件安装目录，请根据实际情况，选择存储空间最大的盘进行安装。<Mark /></Para>
        <SectionHeading number="7.3.2.">安装操作</SectionHeading>
        <HangingPara><ItemNumber>(1)</ItemNumber>修改配置文件<Latin $before>config.mingmo.ini, </Latin>修改【<Latin>MINGMO_K8S_YAML_INSTALL_HOSTS=10.57.16.75</Latin>】<Mark /></HangingPara>
        <HangingPara>
          <ItemNumber>(2)</ItemNumber>执行：<Latin>sh td_install.sh mingmo-k8s-yaml install </Latin>或者修改<Latin $before>td_install.sh</Latin><br />
          【<Latin>OPERATE_SOFT_LIST=mingmo-k8s-yaml</Latin>】、【<Latin>OPERATE_TYPE=install</Latin>】<Latin>.</Latin><Mark />
        </HangingPara>
        <Para>通常情况，程序能够在一分钟之内执行完毕。<Mark /></Para>
        <SectionHeading number="7.3.3.">启停服务</SectionHeading>
        <Para>非服务，无需启停。<Mark /></Para>
        <SectionHeading number="7.3.4.">常见问题</SectionHeading>
        <Para>暂无<Mark /></Para>
        <EmptyPara><Mark /></EmptyPara>
        <SectionHeading level={2} number="7.4.">安装<Latin $large $before>Mysql</Latin></SectionHeading>
        <Para>
          <FullLine>本产品支持<Latin $before>MySQL</Latin>、<Latin>TiDB</Latin>、达梦数据库，默认使用<Latin $before $after>MySQL</Latin>数据库。如项目上需要使用其他类型数据库</FullLine>
          <NextLine>时，本小节无需安装。<Mark /></NextLine>
        </Para>
        <SectionHeading number="7.4.1.">安装路径</SectionHeading>
      </Text>
    </Page>
  </Workspace>
);

const Status = () => (
  <StatusBar>
    <StatusSide $gap={38}>
      <StatusText $wide>第 49 页，共 119 页</StatusText>
      <StatusText>22420 个字</StatusText>
      <PlainButton aria-label="拼写检查">
        <Svg w={32} h={28}>
          <path d="M14 4C10 1 6 1 2 2V23C6 22 10 22 14 25C17 22 20 22 26 23M14 4V27M14 4C17 1 20 1 26 2V6" stroke="#666" strokeWidth="2" />
          <path d="M20 8L31 19M31 8L20 19" stroke="#666" strokeWidth="2.500" />
        </Svg>
      </PlainButton>
      <StatusText>中文 (中国)</StatusText>
    </StatusSide>
    <StatusSide $gap={0}>
      <FocusButton $gap={12}>
        <Svg w={30} h={24}>
          <rect x="1" y="1" width="28" height="22" rx="1" stroke="#555" strokeWidth="2" />
          <path d="M6 9V6H10M20 6H24V9M24 15V18H20M10 18H6V15" stroke="#555" strokeWidth="2" />
        </Svg>
        专注
      </FocusButton>
      <ViewButton $on aria-label="页面视图">
        <Svg w={30} h={28}><rect x="1" y="1" width="28" height="25" fill="#9a9a9a" stroke="#fff" strokeWidth="2" />{bars([[4, 5, 22], [4, 10, 22], [4, 15, 22], [4, 20, 22]], "#fff")}</Svg>
      </ViewButton>
      <ViewButton aria-label="Web 版式">
        <Svg w={34} h={28}>
          <path d="M13 23H1V1H24V9" stroke="#666" strokeWidth="2" />{bars([[5, 5, 15], [5, 10, 13], [5, 14, 9], [5, 18, 8]], "#666")}
          <circle cx="24" cy="19" r="9" fill="#666" /><path d="M19 14L24 16L22 20L25 22L24 26M27 12L29 17L32 18" stroke="#ddd" strokeWidth="2" />
        </Svg>
      </ViewButton>
      <ViewButton aria-label="大纲">
        <Svg w={30} h={24}>{bars([[0, 1, 4], [6, 1, 16], [8, 7, 4], [14, 7, 16], [8, 13, 4], [14, 13, 16], [4, 20, 4], [10, 20, 16]], "#666")}</Svg>
      </ViewButton>
      <ViewButton aria-label="草稿">
        <Svg w={30} h={24}>{bars([[1, 1, 28], [1, 7, 22], [1, 13, 27], [1, 20, 23]], "#555")}</Svg>
      </ViewButton>
      <ZoomControls>
        <PlainButton aria-label="缩小"><Svg w={16} h={16}><path d="M0 8H16" stroke="#555" strokeWidth="4" /></Svg></PlainButton>
        <ZoomSlider type="range" min="0" max="100" defaultValue="60" aria-label="缩放" />
        <PlainButton aria-label="放大"><Svg w={16} h={16}><path d="M0 8H16M8 0V16" stroke="#555" strokeWidth="4" /></Svg></PlainButton>
        <ZoomValue>178%</ZoomValue>
      </ZoomControls>
    </StatusSide>
  </StatusBar>
);

export default function WordWindow() {
  return (
    <App lang="zh-CN">
      <GlobalStyle />
      <TitleBar>
        <TitleRow>
          <QuickTools>
            <PlainButton aria-label="主页"><HomeIcon /></PlainButton>
            <PlainButton aria-label="保存"><SaveIcon /></PlainButton>
            <PlainButton aria-label="撤消" $gap={12}><UndoIcon /><Caret color="#dde4f1" /></PlainButton>
            <PlainButton aria-label="恢复" disabled><RedoIcon /></PlainButton>
            <PlainButton aria-label="打印"><PrintIcon /></PlainButton>
            <PlainButton aria-label="自定义工具栏"><MoreIcon /></PlainButton>
          </QuickTools>
          <DocTitle><WordIcon />明模 v2.5.4 部署文档</DocTitle>
          <TitleRight>
            <SearchBox><SearchIcon /><SearchInput type="text" placeholder="在文档中搜索" aria-label="在文档中搜索" /></SearchBox>
            <PlainButton aria-label="反馈"><PersonTalkIcon /></PlainButton>
          </TitleRight>
        </TitleRow>
        <TabRow>
          <Tabs>{TABS.map((t, i) => <Tab key={t} $active={i === 0}>{t}</Tab>)}</Tabs>
          <ShareArea>
            <PlainButton $gap={8}><SharePersonIcon />共享</PlainButton>
            <PlainButton aria-label="折叠功能区"><CollapseIcon /></PlainButton>
          </ShareArea>
        </TabRow>
      </TitleBar>
      <Ribbon>
        <Clipboard>
          <PasteButton><PasteIcon />粘贴</PasteButton>
          <SmallTools>
            <PlainButton aria-label="剪切"><CutIcon /></PlainButton>
            <PlainButton aria-label="复制"><CopyIcon /></PlainButton>
            <PlainButton aria-label="格式刷"><BrushIcon /></PlainButton>
          </SmallTools>
        </Clipboard>
        <Separator $left={24} $right={17} />
        <FontTools />
        <Separator $left={17} $right={17} />
        <ParagraphTools />
        <Separator $left={17} $right={14} />
        <StyleGallery />
        <PaneButton><PaneIcon />样式窗格</PaneButton>
      </Ribbon>
      <Body>
        <NavigationPane />
        <Document />
      </Body>
      <Status />
    </App>
  );
}
